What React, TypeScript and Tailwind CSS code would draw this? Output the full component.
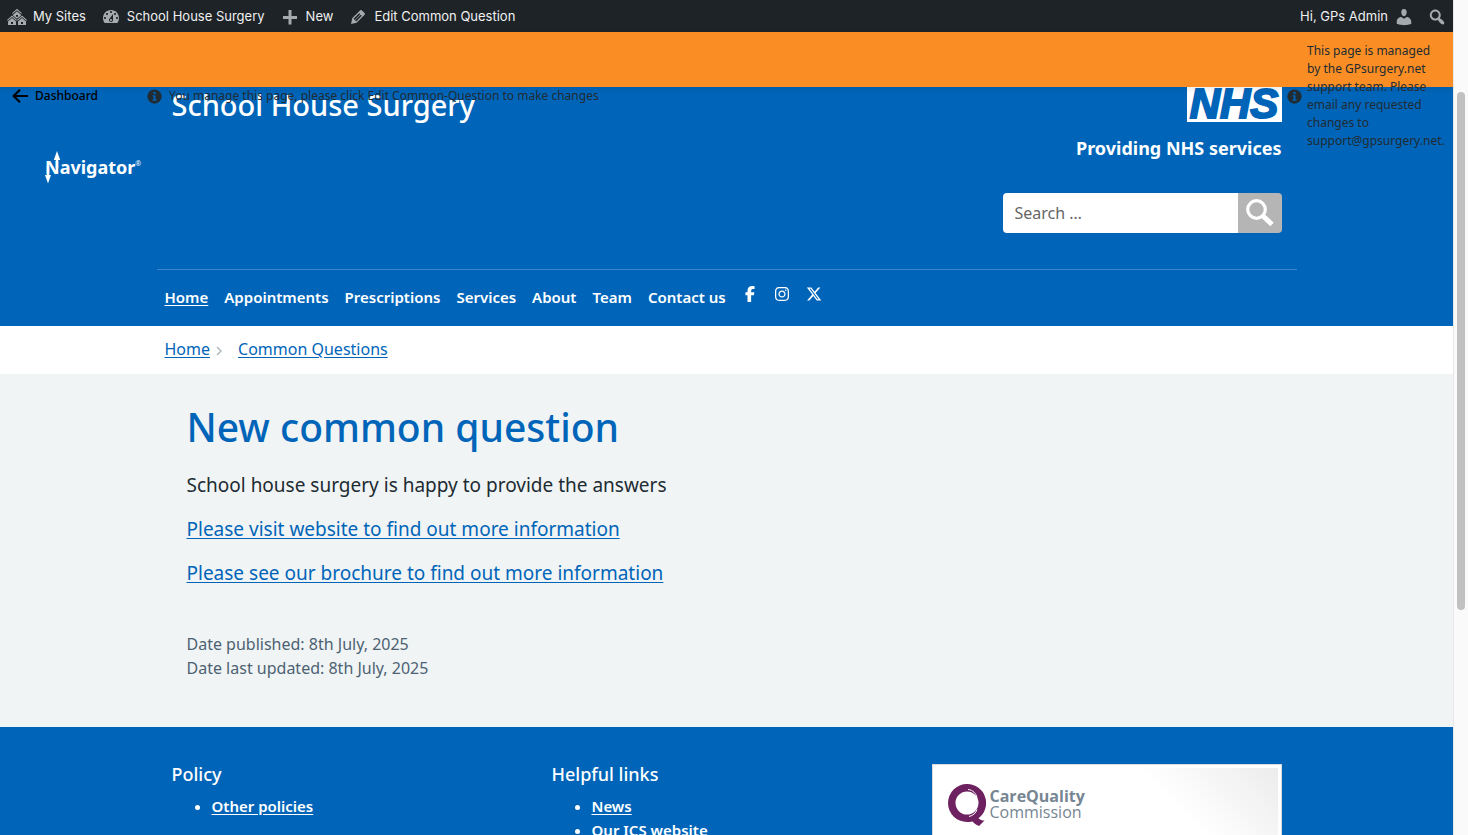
import type { ReactNode } from "react";
import { FaFacebookF, FaInstagram, FaXTwitter } from "react-icons/fa6";

const icons = {
  sites:
    "M14.27 6.87L10 3.14 5.73 6.87 5 6.14l5-4.38 5 4.38zM14 8.42l-4.05 3.43L6 8.38v-.74l4-3.5 4 3.5v.78zM11 9.7V8H9v1.7h2zm-1.73 4.03L5 10 .73 13.73 0 13l5-4.38L10 13zm10 0L15 10l-4.27 3.73L10 13l5-4.38L20 13zM5 11l4 3.5V18H1v-3.5zm10 0l4 3.5V18h-8v-3.5zm-9 6v-2H4v2h2zm10 0v-2h-2v2h2z",
  dashboard:
    "M3.76 16h12.48c1.1-1.37 1.76-3.11 1.76-5 0-4.42-3.58-8-8-8s-8 3.58-8 8c0 1.89.66 3.63 1.76 5zM10 4c.55 0 1 .45 1 1s-.45 1-1 1-1-.45-1-1 .45-1 1-1zM6 6c.55 0 1 .45 1 1s-.45 1-1 1-1-.45-1-1 .45-1 1-1zm8 0c.55 0 1 .45 1 1s-.45 1-1 1-1-.45-1-1 .45-1 1-1zm-5.37 5.55L12 7v6c0 1.1-.9 2-2 2s-2-.9-2-2c0-.57.24-1.08.63-1.45zM4 10c.55 0 1 .45 1 1s-.45 1-1 1-1-.45-1-1 .45-1 1-1zm12 0c.55 0 1 .45 1 1s-.45 1-1 1-1-.45-1-1 .45-1 1-1zm-5 3c0-.55-.45-1-1-1s-1 .45-1 1 .45 1 1 1 1-.45 1-1z",
  plus: "M17 9v3h-5.5v5.500h-3V12H3V9h5.500V3h3v6z",
  edit: "M13.89 3.39l2.71 2.72c.46.46.42 1.24.03 1.64l-8.01 8.02-5.56 1.16 1.16-5.58s7.6-7.63 7.99-8.03c.39-.39 1.22-.39 1.68.07zm-2.73 2.79l-5.59 5.61 1.11 1.11 5.54-5.65zm-2.97 8.23l5.58-5.6-1.07-1.08-5.59 5.6z",
  user: "M10 9.25c-2.27 0-2.73-3.44-2.73-3.44C7 4.02 7.82 2 9.97 2c2.16 0 2.98 2.02 2.71 3.81 0 0-.41 3.44-2.68 3.44zm0 2.57L12.72 10c2.39 0 4.52 2.33 4.52 4.53v2.49s-3.65 1.13-7.24 1.13c-3.65 0-7.24-1.13-7.24-1.13v-2.49c0-2.25 1.94-4.48 4.47-4.48z",
  search:
    "M12.14 4.18c1.87 1.87 2.11 4.75.72 6.89.12.1.22.21.36.31.2.16.47.36.81.59.34.24.56.39.66.47.42.31.73.57.94.78.32.32.6.65.84 1 .25.35.44.69.59 1.04.14.35.21.68.18 1-.02.32-.14.59-.36.81s-.49.34-.81.36c-.31.02-.65-.04-.99-.19-.35-.14-.7-.34-1.04-.59-.35-.24-.68-.52-1-.84-.21-.21-.47-.52-.77-.93-.1-.13-.25-.35-.47-.66-.22-.32-.4-.57-.56-.78-.16-.2-.29-.35-.44-.5-2.07 1.09-4.69.76-6.44-.98-2.14-2.15-2.14-5.64 0-7.78 2.15-2.15 5.63-2.15 7.78 0zm-1.41 6.36c1.36-1.37 1.36-3.58 0-4.95-1.37-1.37-3.59-1.37-4.95 0-1.37 1.37-1.37 3.58 0 4.95 1.36 1.37 3.58 1.37 4.95 0z",
};

function BarIcon({ name }: { name: keyof typeof icons }) {
  return (
    <svg viewBox="0 0 20 20" aria-hidden="true" className="size-5 shrink-0 fill-[#a7aaad]">
      <path fillRule="evenodd" d={icons[name]} />
    </svg>
  );
}

function BarLink({ icon, children }: { icon: keyof typeof icons; children: ReactNode }) {
  return (
    <a href="#" className="flex items-center gap-1.5">
      <BarIcon name={icon} />
      {children}
    </a>
  );
}

function AdminBar() {
  return (
    <div className="flex h-8 shrink-0 items-center justify-between bg-[#1d2327] pt-px pr-1.5 pl-[7px] font-['Inter',sans-serif] text-[13px] text-[#f0f0f1]">
      <nav aria-label="Toolbar" className="flex items-center gap-[15px]">
        <BarLink icon="sites">My Sites</BarLink>
        <BarLink icon="dashboard">School House Surgery</BarLink>
        <BarLink icon="plus">New</BarLink>
        <BarLink icon="edit">Edit Common Question</BarLink>
      </nav>
      <div className="flex items-center gap-[13px]">
        <a href="#" className="flex items-center gap-1.5">
          Hi, GPs Admin
          <BarIcon name="user" />
        </a>
        <button type="button" aria-label="Search">
          <BarIcon name="search" />
        </button>
      </div>
    </div>
  );
}

function InfoIcon() {
  return (
    <svg viewBox="0 0 16 16" aria-hidden="true" className="size-[15px] shrink-0">
      <circle cx="8" cy="8" r="7.6" fill="#212b32" />
      <circle cx="8" cy="4.200" r="1.300" fill="#0065b9" />
      <path d="M6 6.600h3v4.500h1.200v1.400H5.900v-1.400H7V8H6z" fill="#0065b9" />
    </svg>
  );
}

function NavigatorLogo() {
  return (
    <div className="absolute top-[118px] left-[45px] flex h-[34px] items-center text-white">
      <span className="text-lg leading-none font-bold">Navigator</span>
      <sup className="text-[7px]">®</sup>
      <svg viewBox="0 0 18 34" aria-hidden="true" className="absolute top-0 left-0 h-[34px] w-[18px] fill-white">
        <path d="M12 1l3.200 9h-2v8h-2.400v-8h-2zM3 33.500L0 25h1.800v-9h2.400v9H6z" />
      </svg>
    </div>
  );
}

function ManageNotice() {
  return (
    <div className="relative z-10 h-[55px] shrink-0 bg-[#fa8e24] shadow-[0_3px_6px_rgba(0,0,0,0.08)]">
      <div className="absolute inset-x-0 top-2.5 flex items-center px-3 text-xs text-[#212b32]">
        <a href="#" className="flex w-[135px] items-center gap-[7px] font-medium text-black">
          <svg viewBox="0 0 16 14" aria-hidden="true" className="h-3.5 w-4 fill-none stroke-black stroke-2">
            <path d="M16 7H1.500M8 .8L1.500 7 8 13.200" />
          </svg>
          Dashboard
        </a>
        <InfoIcon />
        <p className="flex-1 pl-[7px]">You manage this page, please click Edit Common-Question to make changes</p>
        <InfoIcon />
        <p className="w-[139px] pl-[5px] leading-[18px] whitespace-nowrap">
          This page is managed
          <br />
          by the GPsurgery.net
          <br />
          support team. Please
          <br />
          email any requested
          <br />
          changes to
          <br />
          support@gpsurgery.net.
        </p>
      </div>
      <NavigatorLogo />
    </div>
  );
}

const menu = ["Home", "Appointments", "Prescriptions", "Services", "About", "Team", "Contact us"];

function Header() {
  return (
    <header className="bg-[#0065b9] text-white">
      <div className="mx-auto max-w-[1140px]">
        <div className="flex h-[183px] justify-between border-b border-[#3f85cc] px-[15px]">
          <a href="#" className="text-[29px] leading-9 font-medium">
            School House Surgery
          </a>
          <div className="flex w-[279px] flex-col items-end">
            <div className="flex h-[35px] w-[95px] items-end justify-center overflow-hidden bg-white font-['Liberation_Sans',sans-serif] text-[42px] leading-9 font-bold text-[#0065b9] italic">
              <span className="[-webkit-text-stroke:2px_#0065b9]">NHS</span>
            </div>
            <p className="mt-3 text-lg leading-7 font-bold whitespace-nowrap">Providing NHS services</p>
            <form className="mt-[31px] flex h-10 w-full overflow-hidden rounded">
              <input
                type="search"
                aria-label="Search"
                placeholder="Search …"
                className="min-w-0 flex-1 bg-white px-3 text-base text-[#212b32] placeholder:text-[#666]"
              />
              <button type="button" aria-label="Submit search" className="flex w-11 items-center justify-center bg-[#b5b5b5]">
                <svg viewBox="0 0 28 28" aria-hidden="true" className="size-7 fill-none stroke-white">
                  <circle cx="10.500" cy="10.500" r="8.800" strokeWidth="3.200" />
                  <path d="M16.500 16.500l9.500 9" strokeWidth="5" />
                </svg>
              </button>
            </form>
          </div>
        </div>
        <nav aria-label="Main" className="flex h-14 items-center gap-4 px-2 pb-0.5 text-[15px] font-semibold">
          {menu.map((item) => (
            <a key={item} href="#" className={item === "Home" ? "underline underline-offset-2" : ""}>
              {item}
            </a>
          ))}
          <div className="flex items-center gap-4 pb-1.5">
            <a href="#" aria-label="Facebook" className="flex w-4 justify-center">
              <FaFacebookF size={16} />
            </a>
            <a href="#" aria-label="Instagram">
              <FaInstagram size={16} />
            </a>
            <a href="#" aria-label="X">
              <FaXTwitter size={16} />
            </a>
          </div>
        </nav>
      </div>
    </header>
  );
}

function Breadcrumbs() {
  return (
    <nav aria-label="Breadcrumb" className="bg-white">
      <div className="mx-auto flex h-12 max-w-[1140px] items-center px-2 pb-0.5 text-base text-[#0065b9]">
        <a href="#" className="underline underline-offset-2">
          Home
        </a>
        <svg viewBox="0 0 6 10" aria-hidden="true" className="mx-1.5 mt-1 h-2.5 w-1.5 fill-none stroke-[#aeb7bd] stroke-[1.500]">
          <path d="M1 1l4 4-4 4" />
        </svg>
        <a href="#" className="pl-2.5 underline underline-offset-2">
          Common Questions
        </a>
      </div>
    </nav>
  );
}

function Article() {
  return (
    <main className="h-[353px] shrink-0 bg-[#f0f4f5]">
      <div className="mx-auto max-w-[1140px] px-[30px] pt-7 text-[19px] leading-7 text-[#212b32]">
        <h1 className="text-[39px] leading-[50px] font-medium text-[#0065b9]">New common question</h1>
        <p className="mt-[19px]">School house surgery is happy to provide the answers</p>
        <p className="mt-4">
          <a href="#" className="text-[#0065b9] underline underline-offset-2">
            Please visit website to find out more information
          </a>
        </p>
        <p className="mt-4">
          <a href="#" className="text-[#0065b9] underline underline-offset-2">
            Please see our brochure to find out more information
          </a>
        </p>
        <div className="mt-[45px] text-base leading-6 text-[#4c6272]">
          <p>Date published: 8th July, 2025</p>
          <p>Date last updated: 8th July, 2025</p>
        </div>
      </div>
    </main>
  );
}

function LinkList({ title, links }: { title: string; links: string[] }) {
  return (
    <section className="px-[15px]">
      <h2 className="text-lg leading-6 font-medium">{title}</h2>
      <ul className="mt-2 list-disc pl-10 text-[15px] leading-6 font-semibold">
        {links.map((link) => (
          <li key={link}>
            <a href="#" className="underline underline-offset-2">
              {link}
            </a>
          </li>
        ))}
      </ul>
    </section>
  );
}

function CareQualityCard() {
  return (
    <section className="px-[15px] pt-0.5">
      <div className="h-[220px] border border-[#dadada] bg-white p-[3px]">
        <div className="flex h-full items-start bg-[linear-gradient(225deg,#ececec,#ffffff_100px)] pt-4 pl-3">
          <svg viewBox="0 0 38 43" aria-label="Care Quality Commission" className="h-[43px] w-[38px]">
            <path
              fill="#6d2161"
              fillRule="evenodd"
              d="M19 0a19 19 0 0 1 11.500 34.200c1.800 1.800 3.500 2.300 6 2.300L31 42c-3-1-5-3-6.500-4.500C22 38 21 38 19 38A19 19 0 0 1 19 0zm0 7.500a11.500 11.500 0 1 0 0 23 11.500 11.500 0 0 0 0-23z"
            />
            <path fill="none" stroke="#fff" strokeWidth="1" d="M20 5.500c5 .5 8 4 9 8M21 32.500c4-.8 7-3.500 8-7" />
          </svg>
          <p className="pt-1 pl-1 font-['Open_Sans',sans-serif] text-base leading-4 text-[#768692]">
            <strong>CareQuality</strong>
            <br />
            Commission
          </p>
        </div>
      </div>
    </section>
  );
}

export default function App() {
  return (
    <div className="flex h-screen overflow-hidden bg-white font-['Noto_Sans',sans-serif]">
      <div className="flex min-w-0 flex-1 flex-col overflow-hidden">
        <AdminBar />
        <ManageNotice />
        <Header />
        <Breadcrumbs />
        <Article />
        <footer className="shrink-0 bg-[#0065b9] text-white">
          <div className="mx-auto grid max-w-[1140px] grid-cols-3 pt-[35px]">
            <LinkList title="Policy" links={["Other policies"]} />
            <LinkList title="Helpful links" links={["News", "Our ICS website"]} />
            <CareQualityCard />
          </div>
        </footer>
      </div>
      <div aria-hidden="true" className="w-[15px] shrink-0 border-l border-[#e8e8e8] bg-[#fafafa] px-[3px] pt-[92px]">
        <div className="h-[518px] rounded-full bg-[#c1c1c1]" />
      </div>
    </div>
  );
}
